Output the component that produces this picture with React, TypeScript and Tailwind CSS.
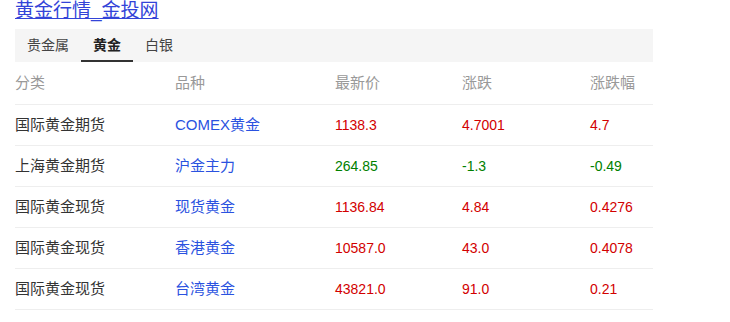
const rows = [
  { cat: '国际黄金期货', name: 'COMEX黄金', price: '1138.3', chg: '4.7001', pct: '4.7', up: true },
  { cat: '上海黄金期货', name: '沪金主力', price: '264.85', chg: '-1.3', pct: '-0.49', up: false },
  { cat: '国际黄金现货', name: '现货黄金', price: '1136.84', chg: '4.84', pct: '0.4276', up: true },
  { cat: '国际黄金现货', name: '香港黄金', price: '10587.0', chg: '43.0', pct: '0.4078', up: true },
  { cat: '国际黄金现货', name: '台湾黄金', price: '43821.0', chg: '91.0', pct: '0.21', up: true },
];

const tabs = ['贵金属', '黄金', '白银'];

export default function App() {
  return (
    <div
      className="w-[730px] h-[322px] bg-white px-[15px]"
      style={{ fontFamily: '"Liberation Sans", Arial, "Noto Sans CJK SC", sans-serif' }}
    >
      <a href="#" className="block h-[29px] text-[19px] leading-[22px] text-[#3344d8] underline">
        黄金行情_金投网
      </a>
      <div className="w-[638px]">
        <div className="flex h-[33px] bg-[#f5f5f5] text-[14px] text-[#444]">
          {tabs.map((t, i) => (
            <div
              key={t}
              className={`flex items-center justify-center px-[12px] ${
                i === 1 ? 'font-bold text-[#222] border-b-[2px] border-[#333] pt-[2px]' : ''
              }`}
            >
              {t}
            </div>
          ))}
        </div>
        <div className="grid grid-cols-[160px_160px_127px_128px_63px] text-[15px] h-[43px] items-center text-[#999] border-b border-[#eeeeee]">
          <div>分类</div>
          <div>品种</div>
          <div>最新价</div>
          <div>涨跌</div>
          <div>涨跌幅</div>
        </div>
        {rows.map((r, i) => (
          <div
            key={i}
            className="grid grid-cols-[160px_160px_127px_128px_63px] h-[41px] items-center text-[14px] border-b border-[#eeeeee]"
          >
            <div className="text-[15px] text-[#333]">{r.cat}</div>
            <div className="text-[15px] text-[#2a52e0]">{r.name}</div>
            <div className={r.up ? 'text-[#d20000]' : 'text-[#008000]'}>{r.price}</div>
            <div className={r.up ? 'text-[#d20000]' : 'text-[#008000]'}>{r.chg}</div>
            <div className={r.up ? 'text-[#d20000]' : 'text-[#008000]'}>{r.pct}</div>
          </div>
        ))}
      </div>
    </div>
  );
}
